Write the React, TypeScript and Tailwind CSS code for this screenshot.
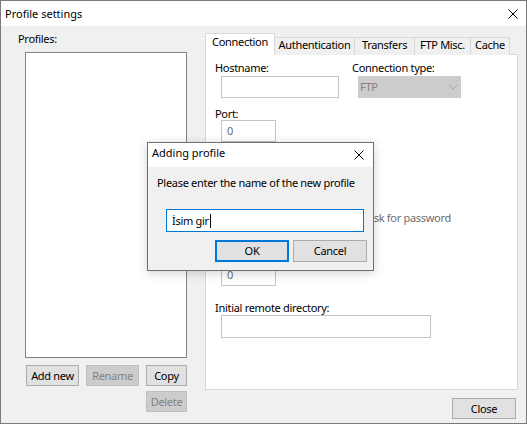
import type { ReactNode } from 'react';
import clsx from 'clsx';

function CloseGlyph() {
  return (
    <svg width={10} height={10} viewBox="0 0 10 10" className="block">
      <path d="M0.5 0.5L9.5 9.5M9.5 0.5L0.5 9.5" stroke="#000" strokeWidth="1" fill="none" />
    </svg>
  );
}

function WinButton({ children, disabled, primary, className }: { children: ReactNode; disabled?: boolean; primary?: boolean; className?: string }) {
  return (
    <button
      type="button"
      className={clsx(
        'flex items-center justify-center leading-[14px]',
        primary ? 'border-2 border-[#0078d7] bg-[#e1e1e1] text-black' : 'border',
        !primary && (disabled ? 'border-[#bfbfbf] bg-[#cccccc] text-[#838383]' : 'border-[#adadad] bg-[#e1e1e1] text-black'),
        className,
      )}
    >
      {children}
    </button>
  );
}

function Label({ children, className }: { children?: ReactNode; className?: string }) {
  return <div className={clsx('h-[16px] leading-[16px] whitespace-nowrap', className)}>{children}</div>;
}

function Field({ value, className }: { value?: string; className?: string }) {
  return (
    <div className={clsx('ml-[6px] flex h-[22px] items-center border border-[#c4c4c4] bg-white pl-[5px] leading-[14px] text-[#6d6d6d]', className)}>
      {value}
    </div>
  );
}

const TABS: Array<{ label: string; w: string }> = [
  { label: 'Connection', w: 'w-[70px]' },
  { label: 'Authentication', w: 'w-[81px]' },
  { label: 'Transfers', w: 'w-[61px]' },
  { label: 'FTP Misc.', w: 'w-[57px]' },
  { label: 'Cache', w: 'w-[40px]' },
];

export default function App() {
  return (
    <div className="relative flex h-[424px] w-[527px] flex-col overflow-hidden border border-[#7a7a7a] bg-[#f0f0f0] font-['Noto_Sans',sans-serif] text-[11px] tracking-[-0.3px] text-black">
      {/* title bar */}
      <div className="flex h-[25px] shrink-0 items-center justify-between bg-white pl-[4px] pr-[8px]">
        <span className="leading-[16px] tracking-normal">Profile settings</span>
        <CloseGlyph />
      </div>

      <div className="flex flex-1">
        {/* profiles column */}
        <div className="flex w-[204px] shrink-0 flex-col pt-[5px]">
          <Label className="ml-[17px]">Profiles:</Label>
          <div className="ml-[24px] mt-[5px] h-[306px] w-[162px] border border-[#828282] bg-white" />
          <div className="ml-[25px] mt-[7px] grid grid-cols-[53px_53px_41px] gap-x-[7px] gap-y-[5px]">
            <WinButton className="h-[21px]">Add new</WinButton>
            <WinButton disabled className="h-[21px]">Rename</WinButton>
            <WinButton className="h-[21px]">Copy</WinButton>
            <WinButton disabled className="col-start-3 h-[21px]">Delete</WinButton>
          </div>
        </div>

        {/* tabs */}
        <div className="flex flex-1 flex-col pt-[7px]">
          <div className="relative z-10 flex h-[22px] items-end">
            {TABS.map((t, i) =>
              i === 0 ? (
                <div key={t.label} className={clsx(t.w, 'flex h-[22px] justify-center border border-b-0 border-[#d9d9d9] bg-white pt-[1px] leading-[14px]')}>
                  {t.label}
                </div>
              ) : (
                <div key={t.label} className={clsx(t.w, '-ml-px flex h-[18px] justify-center border border-b-0 border-[#d9d9d9] bg-[#f0f0f0] leading-[14px]')}>
                  {t.label}
                </div>
              ),
            )}
          </div>

          <div className="-mt-px h-[336px] w-[313px] border border-[#d9d9d9] bg-white">
            <div className="flex flex-col pl-[9px] pt-[5px]">
              <div className="flex">
                <div className="flex w-[137px] flex-col">
                  <Label>Hostname:</Label>
                  <Field className="w-[118px]" />
                </div>
                <div className="flex flex-col">
                  <Label>Connection type:</Label>
                  <div className="ml-[6px] flex h-[22px] w-[103px] items-center justify-between border border-[#cccccc] bg-[#cccccc] pl-[1px] pr-[2px] leading-[14px] text-[#838383]">
                    <span>FTP</span>
                    <svg width={10} height={6} viewBox="0 0 10 6" className="block">
                      <path d="M0.5 0.5L5 5L9.5 0.5" stroke="#a8a8a8" strokeWidth="1" fill="none" />
                    </svg>
                  </div>
                </div>
              </div>

              <Label className="mt-[8px]">Port:</Label>
              <Field value="0" className="-mt-[2px] w-[55px]" />

              {/* username / password rows sit under the modal */}
              <Label className="mt-[8px]" />
              <Field className="-mt-[2px] w-[118px]" />

              <div className="mt-[8px] flex">
                <div className="flex w-[137px] flex-col">
                  <Label />
                  <Field className="-mt-[2px] w-[118px]" />
                </div>
                <div className="flex items-end pb-[4px]">
                  <div className="flex items-center">
                    <span className="h-[13px] w-[13px] border border-[#bcbcbc] bg-[#e6e6e6]" />
                    <span className="ml-[2px] leading-[16px] text-[#6d6d6d]">Ask for password</span>
                  </div>
                </div>
              </div>

              <Label className="mt-[20px]" />
              <Field value="0" className="-mt-[2px] w-[55px]" />

              <Label className="mt-[14px]">Initial remote directory:</Label>
              <Field className="-mt-[1px] h-[23px] w-[210px]" />
            </div>
          </div>

          <div className="mt-[8px] flex w-[313px] justify-end pr-[2px]">
            <WinButton className="h-[21px] w-[64px]">Close</WinButton>
          </div>
        </div>
      </div>

      {/* modal dialog */}
      <div className="absolute left-[146px] top-[141px] flex h-[129px] w-[227px] flex-col border border-[#6f6f6f] bg-[#f0f0f0] shadow-[0_2px_10px_rgba(0,0,0,0.18)]">
        <div className="flex h-[24px] shrink-0 items-start justify-between bg-white pl-[4px] pr-[9px] pt-[2px]">
          <span className="leading-[16px] tracking-normal">Adding profile</span>
          <div className="pt-[5px]">
            <CloseGlyph />
          </div>
        </div>
        <Label className="ml-[9px] mt-[8px]">Please enter the name of the new profile</Label>
        <div className="ml-[18px] mt-[18px] flex h-[23px] w-[198px] items-center border border-[#0078d7] bg-white pl-[5px] leading-[16px]">
          <span>İsim gir</span>
          <span className="ml-px h-[14px] w-px bg-black" />
        </div>
        <div className="mt-[8px] flex justify-end gap-[4px] pr-[6px]">
          <WinButton primary className="h-[22px] w-[74px]">OK</WinButton>
          <WinButton className="h-[22px] w-[74px]">Cancel</WinButton>
        </div>
      </div>
    </div>
  );
}
